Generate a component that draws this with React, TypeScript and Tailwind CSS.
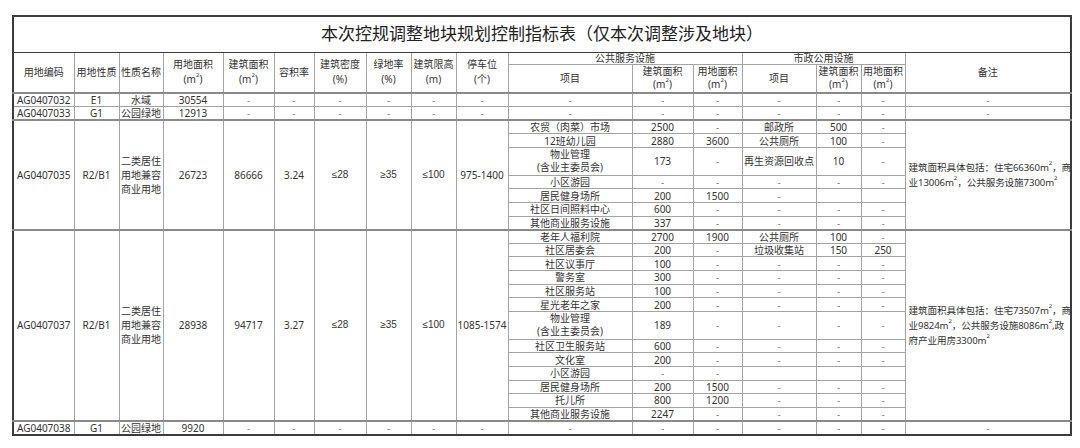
import type { ReactNode } from 'react'

const colWidths = [61, 45, 44, 60, 51, 40, 52, 45, 45, 52, 124, 61, 49, 74, 45, 44, 166]

type SubRow = {
  item: ReactNode
  tall?: boolean
  cells: string[] // 公共建筑面积, 公共用地面积, 市政项目, 市政建筑面积, 市政用地面积
}

type Block = {
  code: string
  nature: string
  name: ReactNode
  area: string
  floor: string
  ratio: string
  density: string
  green: string
  height: string
  parking: string
  note: ReactNode
  rows: SubRow[]
}

const M2 = () => (
  <>
    m<sup className="text-[6px] leading-none align-[3px]">2</sup>
  </>
)

const mixedName = (
  <>
    二类居住
    <br />
    用地兼容
    <br />
    商业用地
  </>
)

const propertyMgmt = (
  <>
    物业管理
    <br />
    (含业主委员会)
  </>
)

const blocks: Block[] = [
  {
    code: 'AG0407035',
    nature: 'R2/B1',
    name: mixedName,
    area: '26723',
    floor: '86666',
    ratio: '3.24',
    density: '≤28',
    green: '≥35',
    height: '≤100',
    parking: '975-1400',
    note: (
      <>
        建筑面积具体包括：住宅66360<M2 />，商
        <br />
        业13006<M2 />，公共服务设施7300<M2 />
      </>
    ),
    rows: [
      { item: '农贸（肉菜）市场', cells: ['2500', '-', '邮政所', '500', '-'] },
      { item: '12班幼儿园', cells: ['2880', '3600', '公共厕所', '100', '-'] },
      { item: propertyMgmt, tall: true, cells: ['173', '-', '再生资源回收点', '10', '-'] },
      { item: '小区游园', cells: ['-', '-', '-', '-', '-'] },
      { item: '居民健身场所', cells: ['200', '1500', '-', '', ''] },
      { item: '社区日间照料中心', cells: ['600', '-', '-', '-', '-'] },
      { item: '其他商业服务设施', cells: ['337', '-', '-', '-', '-'] },
    ],
  },
  {
    code: 'AG0407037',
    nature: 'R2/B1',
    name: mixedName,
    area: '28938',
    floor: '94717',
    ratio: '3.27',
    density: '≤28',
    green: '≥35',
    height: '≤100',
    parking: '1085-1574',
    note: (
      <>
        建筑面积具体包括：住宅73507<M2 />，商
        <br />
        业9824<M2 />，公共服务设施8086<M2 />,政
        <br />
        府产业用房3300<M2 />
      </>
    ),
    rows: [
      { item: '老年人福利院', cells: ['2700', '1900', '公共厕所', '100', '-'] },
      { item: '社区居委会', cells: ['200', '-', '垃圾收集站', '150', '250'] },
      { item: '社区议事厅', cells: ['100', '-', '-', '-', '-'] },
      { item: '警务室', cells: ['300', '-', '-', '-', '-'] },
      { item: '社区服务站', cells: ['100', '-', '-', '-', '-'] },
      { item: '星光老年之家', cells: ['200', '-', '-', '-', '-'] },
      { item: propertyMgmt, tall: true, cells: ['189', '-', '-', '-', '-'] },
      { item: '社区卫生服务站', cells: ['600', '-', '-', '-', '-'] },
      { item: '文化室', cells: ['200', '-', '-', '-', '-'] },
      { item: '小区游园', cells: ['-', '-', '', '', ''] },
      { item: '居民健身场所', cells: ['200', '1500', '-', '-', '-'] },
      { item: '托儿所', cells: ['800', '1200', '-', '-', '-'] },
      { item: '其他商业服务设施', cells: ['2247', '-', '-', '-', '-'] },
    ],
  },
]

const base = 'border border-[#a3a3a3] p-0 text-center align-middle'
const sep = 'border-t-2 border-t-[#8a8a8a]'
const sym = "font-['Liberation_Sans',sans-serif]"

function Td({
  children,
  className = '',
  rowSpan,
  colSpan,
}: {
  children?: ReactNode
  className?: string
  rowSpan?: number
  colSpan?: number
}) {
  return (
    <td rowSpan={rowSpan} colSpan={colSpan} className={`${base} ${className}`}>
      {children}
    </td>
  )
}

function SimpleRow({ code, nature, name, area, first }: { code: string; nature: string; name: string; area: string; first?: boolean }) {
  const s = first ? sep : ''
  const vals = [code, nature, name, area, '-', '-', '-', '-', '-', '-', '-', '-', '-', '-', '-', '-', '-']
  return (
    <tr className="h-[13.6px]">
      {vals.map((v, i) => (
        <Td key={i} className={`${s} ${i < 4 ? 'text-[#333]' : 'text-[#888]'}`}>
          {v}
        </Td>
      ))}
    </tr>
  )
}

function BlockRows({ block }: { block: Block }) {
  const n = block.rows.length
  const left = [block.code, block.nature, block.name, block.area, block.floor, block.ratio, block.density, block.green, block.height, block.parking]
  return (
    <>
      {block.rows.map((r, i) => {
        const s = i === 0 ? sep : ''
        return (
          <tr key={i} className={r.tall ? 'h-[27.2px]' : 'h-[13.6px]'}>
            {i === 0 &&
              left.map((v, j) => (
                <Td key={`l${j}`} rowSpan={n} className={`${s} ${j >= 6 && j <= 8 ? sym : ''} ${j === 2 ? 'leading-[14px]' : ''}`}>
                  {v}
                </Td>
              ))}
            <Td className={`${s} ${r.tall ? 'leading-[13.5px]' : ''}`}>{r.item}</Td>
            {r.cells.map((c, j) => (
              <Td key={j} className={`${s} ${c === '-' ? 'text-[#888]' : ''}`}>
                {c}
              </Td>
            ))}
            {i === 0 && (
              <Td rowSpan={n} className={`${s} text-left pl-[3px] leading-[15px] whitespace-nowrap text-[9.6px] tracking-[-0.1px]`}>
                {block.note}
              </Td>
            )}
          </tr>
        )
      })}
    </>
  )
}

export default function App() {
  return (
    <div className="min-h-[448px] bg-white pt-[15px] pl-[12px] font-['Noto_Sans','Noto_Sans_CJK_SC',sans-serif] text-[#333]">
      <table className="table-fixed border-collapse border-2 border-[#3c3c3c] text-[10px] leading-[12px]" style={{ width: 1058 }}>
        <colgroup>
          {colWidths.map((w, i) => (
            <col key={i} style={{ width: w }} />
          ))}
        </colgroup>
        <tbody>
          <tr className="h-[36px]">
            <td colSpan={17} className="border border-[#3c3c3c] p-0 text-center align-middle text-[17px] leading-[20px] text-[#222]">
              本次控规调整地块规划控制指标表（仅本次调整涉及地块）
            </td>
          </tr>
          <tr className="h-[12px]">
            <Td rowSpan={2}>用地编码</Td>
            <Td rowSpan={2}>用地性质</Td>
            <Td rowSpan={2}>性质名称</Td>
            <Td rowSpan={2} className="leading-[15px]">
              用地面积
              <br />(<M2 />)
            </Td>
            <Td rowSpan={2} className="leading-[15px]">
              建筑面积
              <br />(<M2 />)
            </Td>
            <Td rowSpan={2}>容积率</Td>
            <Td rowSpan={2} className="leading-[15px]">
              建筑密度
              <br />
              (%)
            </Td>
            <Td rowSpan={2} className="leading-[15px]">
              绿地率
              <br />
              (%)
            </Td>
            <Td rowSpan={2} className="leading-[15px]">
              建筑限高
              <br />
              (m)
            </Td>
            <Td rowSpan={2} className="leading-[15px]">
              停车位
              <br />
              (个)
            </Td>
            <Td colSpan={3} className="leading-[10px]">公共服务设施</Td>
            <Td colSpan={3} className="leading-[10px]">市政公用设施</Td>
            <Td rowSpan={2}>备注</Td>
          </tr>
          <tr className="h-[29px]">
            <Td className="leading-[13.5px]">项目</Td>
            <Td className="leading-[13.5px]">
              建筑面积
              <br />(<M2 />)
            </Td>
            <Td className="leading-[13.5px]">
              用地面积
              <br />(<M2 />)
            </Td>
            <Td className="leading-[13.5px]">项目</Td>
            <Td className="leading-[13.5px]">
              建筑面积
              <br />(<M2 />)
            </Td>
            <Td className="leading-[13.5px]">
              用地面积
              <br />(<M2 />)
            </Td>
          </tr>
          <SimpleRow code="AG0407032" nature="E1" name="水域" area="30554" first />
          <SimpleRow code="AG0407033" nature="G1" name="公园绿地" area="12913" />
          {blocks.map((b) => (
            <BlockRows key={b.code} block={b} />
          ))}
          <SimpleRow code="AG0407038" nature="G1" name="公园绿地" area="9920" first />
        </tbody>
      </table>
    </div>
  )
}
